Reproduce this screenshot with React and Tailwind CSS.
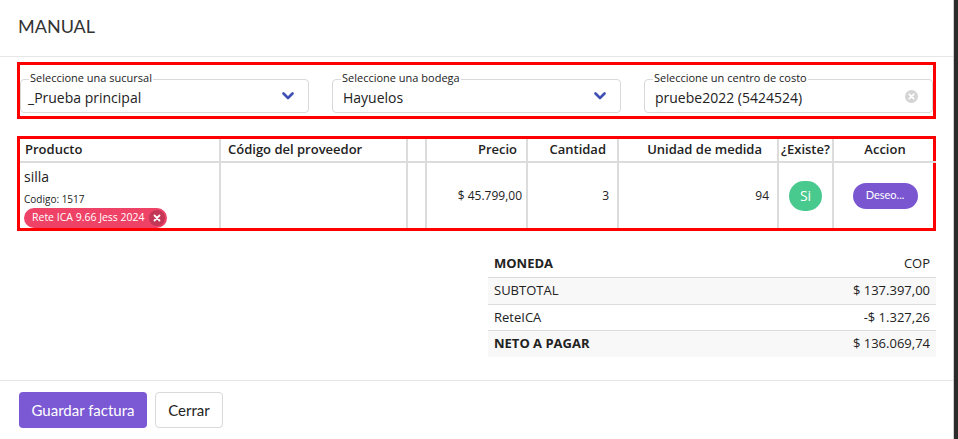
import React from 'react';

const body = { fontFamily: '"Open Sans", "Noto Sans", Arial, sans-serif' };
const lato = { fontFamily: 'Lato, "Open Sans", Arial, sans-serif' };

const Chevron = () => (
  <svg width="12" height="8" viewBox="0 0 12 8" className="shrink-0">
    <path d="M1.5 1.5 L6 6 L10.5 1.5" fill="none" stroke="#3f51b5" strokeWidth="2.6" strokeLinecap="round" strokeLinejoin="round" />
  </svg>
);

const ClearIcon = () => (
  <svg width="13" height="13" viewBox="0 0 13 13" className="shrink-0">
    <circle cx="6.5" cy="6.5" r="6.5" fill="#d4d4d4" />
    <path d="M4.3 4.3 L8.7 8.7 M8.7 4.3 L4.3 8.7" stroke="#fff" strokeWidth="1.8" strokeLinecap="round" />
  </svg>
);

const Field = ({ label, value, icon, pl = 'pl-[10px]' }) => (
  <div className={`relative mt-[14px] h-[34px] rounded-[4px] border border-[#d9d9d9] flex items-center ${pl} pr-[14px]`}>
    <span className="absolute -top-[9px] left-[8px] bg-white px-[1px] text-[11px] leading-[14px] text-[#222]">{label}</span>
    <span className="flex-1 text-[14px] text-[#222] pt-[2px]">{value}</span>
    {icon}
  </div>
);

const headCls = 'h-[24px] border-b-2 border-[#dcdcdc] flex items-center text-[13px] font-semibold text-[#222]';
const cellCls = 'h-[65px] flex items-center text-[12px] text-[#222]';

export default function App() {
  return (
    <div className="h-[439px] w-[958px] bg-[#2b2b2b] overflow-hidden" style={body}>
      <div className="w-[954px] h-full bg-white border-r border-[#cfcfcf] flex flex-col">
        <div className="h-[57px] border-b border-[#e6e6e6] flex items-center px-[18px] pb-[3px]">
          <h1 className="text-[18px] text-[#333]" style={lato}>MANUAL</h1>
        </div>

        <div className="px-[17px] pt-[5px] pb-[23px]">
          <div className="h-[57px] border-[3px] border-[#ff0000] grid grid-cols-3 gap-[23px]">
            <Field label="Seleccione una sucursal" value="_Prueba principal" icon={<Chevron />} pl="pl-[7px]" />
            <Field label="Seleccione una bodega" value="Hayuelos" icon={<Chevron />} />
            <Field label="Seleccione un centro de costo" value="pruebe2022 (5424524)" icon={<ClearIcon />} />
          </div>

          <div className="mt-[17px] border-[3px] border-[#ff0000] grid grid-cols-[201px_187px_19px_101px_91px_160px_55px_102px]">
            <div className={`${headCls} border-r-2 pl-[5px]`}>Producto</div>
            <div className={`${headCls} border-r-2 pl-[7px]`}>Código del proveedor</div>
            <div className={`${headCls} border-r-2`}></div>
            <div className={`${headCls} border-r-2 justify-end pr-[9px]`}>Precio</div>
            <div className={`${headCls} border-r-2 justify-end pr-[11px]`}>Cantidad</div>
            <div className={`${headCls} border-r-2 justify-end pr-[15px]`}>Unidad de medida</div>
            <div className={`${headCls} border-r-2 justify-center`}>¿Existe?</div>
            <div className={`${headCls} justify-center`}>Accion</div>

            <div className="h-[65px] border-r-2 border-[#dcdcdc] flex flex-col pl-[4px] pt-[5px] text-[#222]">
              <span className="text-[14px] leading-[18px]">silla</span>
              <span className="text-[10px] leading-[14px] mt-[6px]">Codigo: 1517</span>
              <span className="mt-[2px] self-start h-[20px] rounded-full bg-[#ee4266] text-white text-[10.5px] flex items-center pl-[8px] pr-[2px] gap-[4px]">
                Rete ICA 9.66 Jess 2024
                <span className="w-[16px] h-[16px] rounded-full bg-[#c23656] flex items-center justify-center">
                  <svg width="8" height="8" viewBox="0 0 8 8">
                    <path d="M1.5 1.5 L6.5 6.5 M6.5 1.5 L1.5 6.5" stroke="#fff" strokeWidth="1.8" strokeLinecap="round" />
                  </svg>
                </span>
              </span>
            </div>
            <div className={`${cellCls} border-r-2 border-[#dcdcdc]`}></div>
            <div className={`${cellCls} border-r-2 border-[#dcdcdc]`}></div>
            <div className={`${cellCls} border-r-2 border-[#dcdcdc] justify-end pr-[4px]`}>$ 45.799,00</div>
            <div className={`${cellCls} border-r-2 border-[#dcdcdc] justify-end pr-[8px]`}>3</div>
            <div className={`${cellCls} border-r-2 border-[#dcdcdc] justify-end pr-[8px]`}>94</div>
            <div className={`${cellCls} border-r-2 border-[#dcdcdc] justify-center`}>
              <span className="w-[33px] h-[30px] rounded-full bg-[#48c98e] text-white text-[14px] flex items-center justify-center">Si</span>
            </div>
            <div className={`${cellCls} justify-center`}>
              <span className="w-[65px] h-[26px] rounded-full bg-[#7a57d1] text-white text-[11px] flex items-center justify-center" style={lato}>Deseo...</span>
            </div>
          </div>

          <div className="mt-[20px] ml-auto w-[448px] text-[13px] text-[#222]">
            <div className="h-[27px] flex items-center justify-between px-[6px] border-b border-[#dcdcdc]">
              <span className="font-bold">MONEDA</span>
              <span>COP</span>
            </div>
            <div className="h-[27px] flex items-center justify-between px-[6px] bg-[#f8f8f8] border-b border-[#dcdcdc]">
              <span>SUBTOTAL</span>
              <span>$ 137.397,00</span>
            </div>
            <div className="h-[26px] flex items-center justify-between px-[6px] border-b border-[#dcdcdc]">
              <span>ReteICA</span>
              <span>-$ 1.327,26</span>
            </div>
            <div className="h-[26px] flex items-center justify-between px-[6px] bg-[#f8f8f8]">
              <span className="font-bold">NETO A PAGAR</span>
              <span>$ 136.069,74</span>
            </div>
          </div>
        </div>

        <div className="border-t border-[#e6e6e6] flex items-start gap-[8px] px-[19px] pt-[11px]" style={lato}>
          <button className="h-[36px] w-[128px] rounded-[4px] bg-[#7b58d4] text-white text-[15px]">Guardar factura</button>
          <button className="h-[36px] w-[68px] rounded-[4px] border border-[#d9d9d9] bg-white text-[#222] text-[15px]">Cerrar</button>
        </div>
      </div>
    </div>
  );
}
